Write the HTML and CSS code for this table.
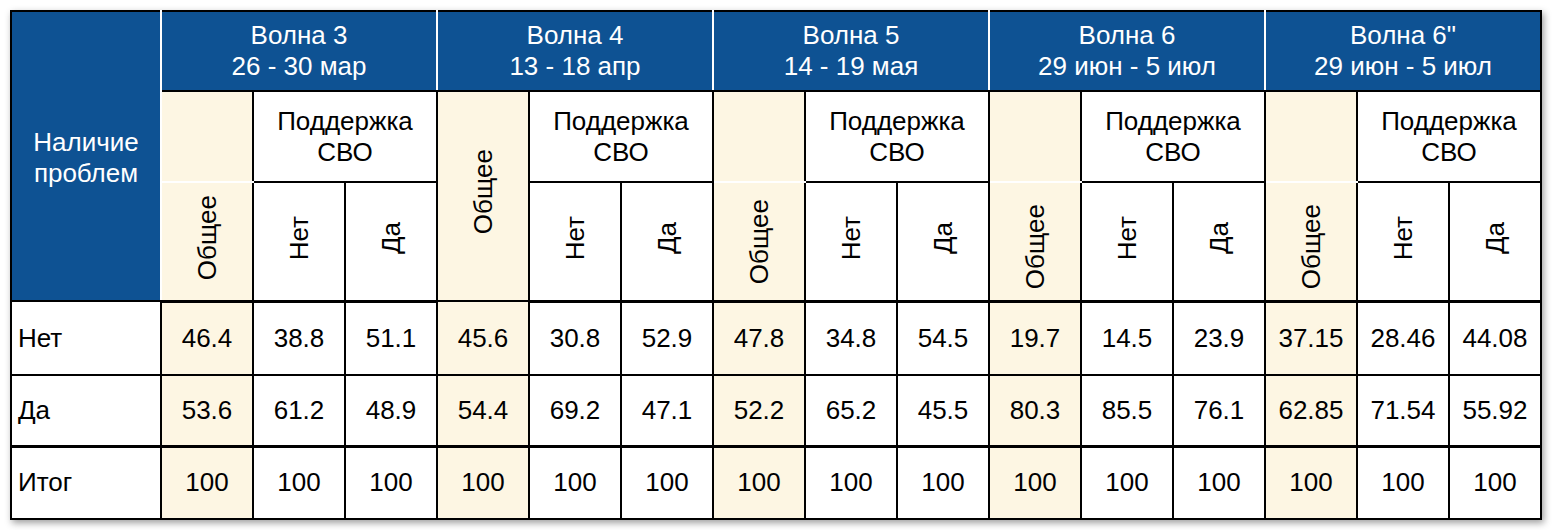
FILE: index.html
```html
<!DOCTYPE html>
<html lang="ru">
<head>
<meta charset="utf-8">
<title>Наличие проблем</title>
<link rel="stylesheet" href="styles.css">
</head>
<body>
<div class="wrap">
<table class="t">
<colgroup><col class="c0"><col span="15" class="c"></colgroup>
<thead>
<tr class="r1">
<th rowspan="3" class="corner">Наличие<br>проблем</th>
<th colspan="3" class="wave">Волна 3<br>26 - 30 мар</th>
<th colspan="3" class="wave">Волна 4<br>13 - 18 апр</th>
<th colspan="3" class="wave">Волна 5<br>14 - 19 мая</th>
<th colspan="3" class="wave">Волна 6<br>29 июн - 5 июл</th>
<th colspan="3" class="wave">Волна 6"<br>29 июн - 5 июл</th>
</tr>
<tr class="r2">
<th class="gen top"></th><th colspan="2" class="sup">Поддержка<br>СВО</th>
<th rowspan="2" class="gen span"><span class="vt">Общее</span></th><th colspan="2" class="sup">Поддержка<br>СВО</th>
<th class="gen top"></th><th colspan="2" class="sup">Поддержка<br>СВО</th>
<th class="gen top"></th><th colspan="2" class="sup">Поддержка<br>СВО</th>
<th class="gen top"></th><th colspan="2" class="sup">Поддержка<br>СВО</th>
</tr>
<tr class="r3">
<th class="gen"><span class="vt">Общее</span></th><th><span class="vt">Нет</span></th><th><span class="vt">Да</span></th>
<th><span class="vt">Нет</span></th><th><span class="vt">Да</span></th>
<th class="gen low1"><span class="vt">Общее</span></th><th><span class="vt">Нет</span></th><th><span class="vt">Да</span></th>
<th class="gen low2"><span class="vt">Общее</span></th><th><span class="vt">Нет</span></th><th><span class="vt">Да</span></th>
<th class="gen low2"><span class="vt">Общее</span></th><th><span class="vt">Нет</span></th><th><span class="vt">Да</span></th>
</tr>
</thead>
<tbody>
<tr class="d1">
<td class="lab">Нет</td>
<td class="gen">46.4</td><td>38.8</td><td>51.1</td>
<td class="gen">45.6</td><td>30.8</td><td>52.9</td>
<td class="gen">47.8</td><td>34.8</td><td>54.5</td>
<td class="gen">19.7</td><td>14.5</td><td>23.9</td>
<td class="gen">37.15</td><td>28.46</td><td>44.08</td>
</tr>
<tr class="d2">
<td class="lab">Да</td>
<td class="gen">53.6</td><td>61.2</td><td>48.9</td>
<td class="gen">54.4</td><td>69.2</td><td>47.1</td>
<td class="gen">52.2</td><td>65.2</td><td>45.5</td>
<td class="gen">80.3</td><td>85.5</td><td>76.1</td>
<td class="gen">62.85</td><td>71.54</td><td>55.92</td>
</tr>
<tr class="d3">
<td class="lab">Итог</td>
<td class="gen">100</td><td>100</td><td>100</td>
<td class="gen">100</td><td>100</td><td>100</td>
<td class="gen">100</td><td>100</td><td>100</td>
<td class="gen">100</td><td>100</td><td>100</td>
<td class="gen">100</td><td>100</td><td>100</td>
</tr>
</tbody>
</table>
</div>
</body>
</html>
```
FILE: styles.css
```css
html, body {
  margin: 0;
  padding: 0;
  background: #ffffff;
}
body {
  padding: 10px;
}
.wrap {
  display: inline-block;
  box-shadow: 2px 3px 7px rgba(0, 0, 0, 0.38);
}
.t {
  border-collapse: collapse;
  table-layout: fixed;
  width: 1532px;
  font-family: "Liberation Sans", Arial, sans-serif;
  font-size: 26px;
  line-height: 31px;
  color: #000;
  border: 2px solid #000;
}
.c0 { width: 150px; }
.t th, .t td {
  border: 2px solid #000;
  padding: 0;
  text-align: center;
  vertical-align: middle;
  font-weight: normal;
  background: #fff;
}
.r1 { height: 80px; }
.r2 { height: 91px; }
.r3 { height: 119px; }
.r3 th { border-bottom: 3px solid #000; }
.t th.corner {
  background: #0E5293;
  color: #fff;
  border-right: 2px solid #fff;
  padding-top: 4px;
}
.t th.wave {
  background: #0E5293;
  color: #fff;
  border-left: 2px solid #fff;
  border-right: 2px solid #fff;
  border-top: 2px solid #000;
  border-bottom: 2px solid #000;
  padding-bottom: 1px;
}
.t th.wave:last-child { border-right: 2px solid #000; }
.t .gen { background: #FDF6E3; }
.t th.gen.top { border-bottom: 2px solid #fff; }
.t th.gen.span { vertical-align: middle; padding-bottom: 2px; }
.t th.low1 { padding-top: 8px; }
.t th.low2 { padding-top: 18px; }
.vt {
  display: inline-block;
  writing-mode: vertical-rl;
  transform: rotate(180deg);
}
.d1 { height: 74px; }
.d2 { height: 71px; }
.d3 { height: 73px; }
.d2 td { border-bottom: 3px solid #000; }
.t td.lab {
  text-align: left;
  padding-left: 6px;
}
```
